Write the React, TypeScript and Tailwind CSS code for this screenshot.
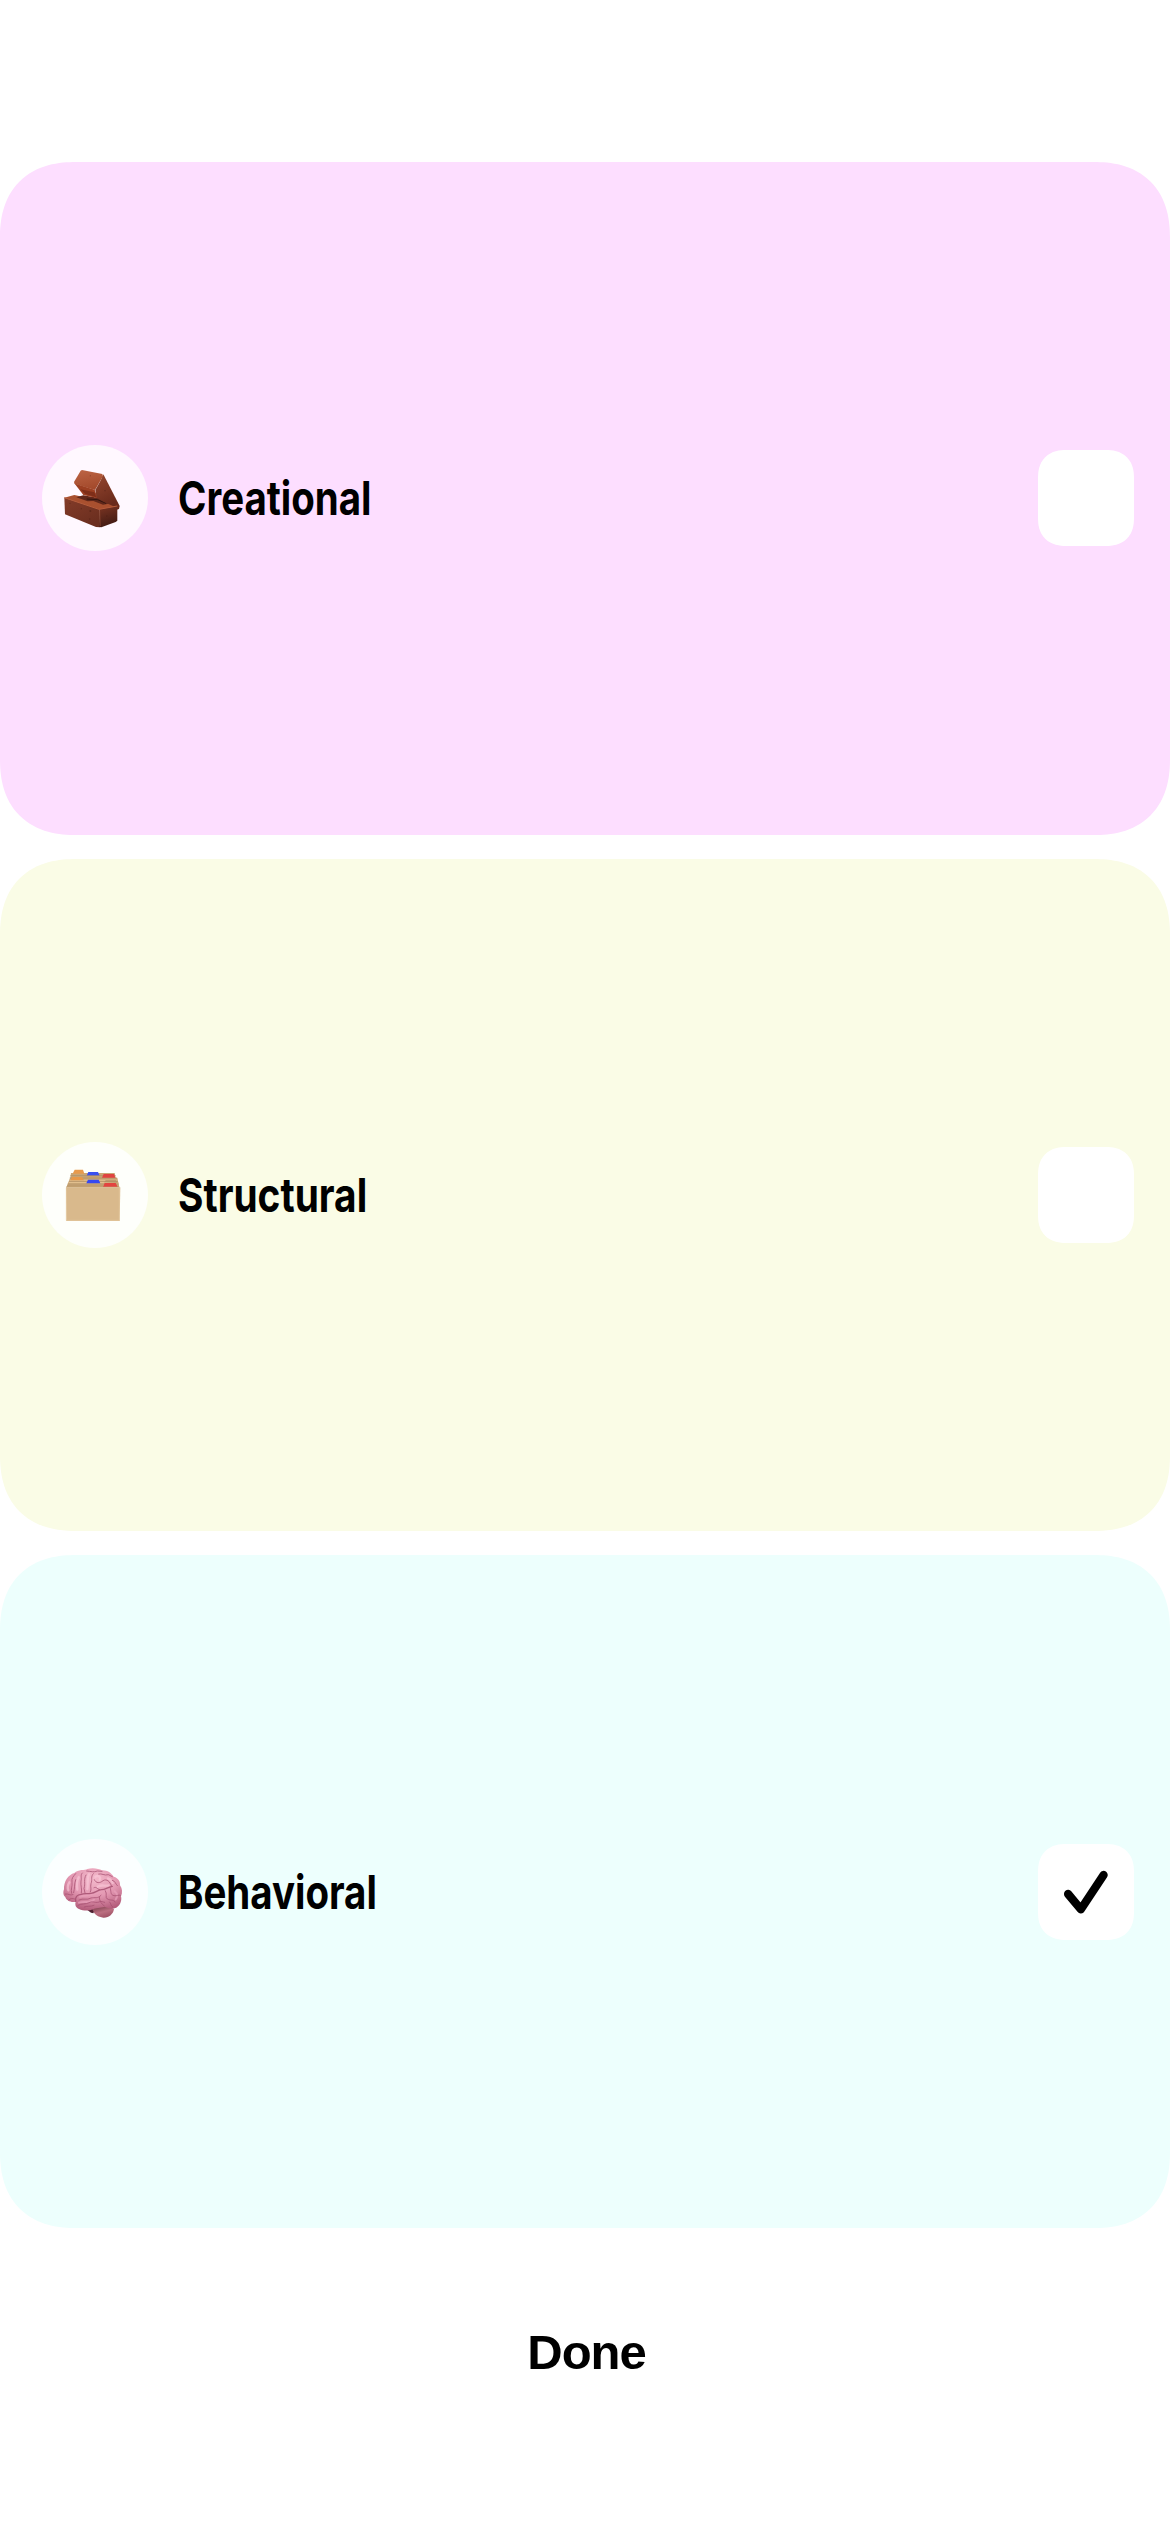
import React, { useState } from "react";

function BrickIcon() {
  return (
    <svg viewBox="36 43 318 318" className="size-full" aria-hidden="true">
      <defs>
        <linearGradient id="brickTop" x1="0" y1="0" x2="0.3" y2="1">
          <stop offset="0" stopColor="#bd6545" />
          <stop offset="1" stopColor="#a44a2c" />
        </linearGradient>
        <linearGradient id="brickSide" x1="0" y1="0" x2="0.4" y2="1">
          <stop offset="0" stopColor="#93452e" />
          <stop offset="1" stopColor="#692a1b" />
        </linearGradient>
        <linearGradient id="brickFront" x1="0" y1="0" x2="0.6" y2="1">
          <stop offset="0" stopColor="#843c29" />
          <stop offset="1" stopColor="#6b2e1f" />
        </linearGradient>
        <linearGradient id="brickEnd" x1="0" y1="0" x2="0.3" y2="1">
          <stop offset="0" stopColor="#7c3523" />
          <stop offset="1" stopColor="#431b13" />
        </linearGradient>
      </defs>
      <path d="M196 202L220 131L269 226L267 235L258 238Z" fill="url(#brickSide)" />
      <path d="M103 201L133 193L258 220L263 230L209 238Z" fill="#a9502f" />
      <path d="M139 200L160 194L212 203L236 219L219 222L190 211L173 212Z" fill="#60271a" />
      <path d="M170 205L203 207L228 218" fill="none" stroke="#321610" strokeWidth="3" />
      <path d="M133 158L194 177L203 203L160 193Z" fill="#9c3f22" />
      <path d="M151 176L193 185L199 200L166 190Z" fill="#7e2e19" />
      <path d="M152 120L156 118L217 130L219 137L195 178L134 160L132 154Z" fill="url(#brickTop)" />
      <path d="M196 178L219 137L265 223L260 231L222 214L200 201Z" fill="url(#brickSide)" />
      <path d="M103 201L209 236L210 290L198 289L105 251Z" fill="url(#brickFront)" />
      <path d="M209 236L262 226V270L257 274L214 290L208 289Z" fill="url(#brickEnd)" />
      <path d="M103 201L207 236L262 226" fill="none" stroke="#b65c3b" strokeWidth="3" />
      <path d="M209 240L211 286" stroke="#8c442e" strokeWidth="2" />
      <g fill="#4b1d14" opacity=".5">
        <circle cx="120" cy="218" r="1.8" />
        <circle cx="154" cy="234" r="1.8" />
        <circle cx="181" cy="241" r="3" />
        <circle cx="179" cy="265" r="2" />
        <circle cx="225" cy="180" r="2" />
        <circle cx="181" cy="135" r="1.5" />
        <circle cx="230" cy="256" r="2" />
      </g>
    </svg>
  );
}

function DividersIcon() {
  return (
    <svg viewBox="36 36 318 318" className="size-full" aria-hidden="true">
      <path d="M123 129H254L257 143H262L268 172H109L121 142Z" fill="#c9a675" />
      <path d="M129 129L134 119H159L163 131H129Z" fill="#e79a4c" />
      <path d="M170 137L175 126H204L209 137Z" fill="#3950f0" />
      <path d="M121 137H257M119 144H260" stroke="#ab8c62" strokeWidth="2" />
      <path d="M216 143L221 132H252L256 143Z" fill="#e04340" />
      <path d="M118 151H263M115 158H265" stroke="#e1bf8e" strokeWidth="4" />
      <path d="M121 151L126 141H156L162 151Z" fill="#e79848" />
      <path d="M117 154H264M113 162H267" stroke="#b4946a" strokeWidth="2" />
      <path d="M222 157L227 151H258L264 158Z" fill="#b49367" />
      <path d="M169 160L174 149H206L211 160Z" fill="#3548f1" />
      <path d="M219 171L224 159H257L263 171Z" fill="#e34440" />
      <path d="M112 167H220M109 171H268" stroke="#b8976b" strokeWidth="2" />
      <path d="M108 172H271L269 273H109Z" fill="#d9b98c" />
      <path d="M109 173V271H268V173" fill="none" stroke="#e5caa0" strokeWidth="2" />
    </svg>
  );
}

function BrainIcon() {
  return (
    <svg viewBox="36 42 318 318" className="size-full" aria-hidden="true">
      <defs>
        <radialGradient id="brainBody" cx=".52" cy=".25" r=".75">
          <stop offset="0" stopColor="#f3b9cb" />
          <stop offset=".55" stopColor="#e398b2" />
          <stop offset="1" stopColor="#b45d7b" />
        </radialGradient>
        <linearGradient id="brainStem" x1="0" y1="0" x2=".5" y2="1">
          <stop offset="0" stopColor="#703642" />
          <stop offset=".6" stopColor="#bb6f81" />
          <stop offset="1" stopColor="#a15367" />
        </linearGradient>
      </defs>
      <path d="M169 253L183 263L190 265L198 246Z" fill="#4d2030" />
      <path d="M187 252C193 239 235 241 252 252C250 267 236 279 220 278C204 276 193 270 187 252Z" fill="url(#brainStem)" />
      <path d="M102 193C101 169 115 149 133 144C145 133 165 136 172 132C188 127 207 131 216 136C231 135 244 144 251 155C266 159 271 171 270 181C277 191 278 203 273 214C277 228 268 247 254 250C244 253 232 248 224 245C210 250 197 247 190 253C174 259 159 257 147 252C138 248 134 240 137 230C124 234 108 226 106 216C99 211 99 201 102 193Z" fill="url(#brainBody)" />
      <g fill="none" stroke="#fbcbdb" strokeWidth="7" strokeLinecap="round" opacity=".6">
        <path d="M146 157C139 168 141 179 142 194" />
        <path d="M177 148C170 160 175 176 172 192" />
        <path d="M196 155C205 150 213 156 209 164" />
        <path d="M234 160C241 162 246 168 248 174" />
        <path d="M118 172C113 180 112 189 115 196" />
        <path d="M203 185C214 178 223 184 236 181" />
      </g>
      <g fill="none" stroke="#e8a0ba" strokeWidth="6" strokeLinecap="round" opacity=".75">
        <path d="M150 215C168 210 185 213 207 203" />
        <path d="M254 199C264 206 262 216 257 223" />
        <path d="M147 233C160 228 177 236 192 224" />
      </g>
      <g fill="none" stroke="#a64f70" strokeWidth="2.6" strokeLinecap="round" strokeLinejoin="round" opacity=".85">
        <path d="M137 229C134 216 142 209 153 208C164 204 170 207 183 205C197 205 203 193 216 194C226 193 232 187 247 184" strokeWidth="4" />
        <path d="M137 146C130 155 124 158 126 172C128 184 121 193 125 205" />
        <path d="M157 144C150 150 156 158 153 168C151 182 157 191 154 204" />
        <path d="M137 164C132 178 135 189 131 203" />
        <path d="M168 150C160 163 167 176 162 190L165 204" />
        <path d="M190 146C181 155 188 164 183 176C180 187 186 192 181 201" />
        <path d="M170 138C183 139 192 143 202 138L216 139" />
        <path d="M193 164C198 176 210 175 219 167C231 160 240 171 244 182" />
        <path d="M206 147C215 144 223 153 235 149L247 155" />
        <path d="M192 188C200 184 200 192 209 194" />
        <path d="M247 166C256 168 256 176 262 182" />
        <path d="M240 187C245 198 239 209 252 212C261 214 266 208 271 211" />
        <path d="M226 197C233 207 224 217 232 222C243 228 250 222 255 231" />
        <path d="M147 225C161 218 170 227 183 219C195 216 203 222 213 211" />
        <path d="M144 241C155 234 164 240 180 232C190 227 196 237 212 229L224 232" />
        <path d="M163 246C171 242 180 246 192 241M208 217C208 229 215 237 223 243" />
        <path d="M239 231C244 235 241 242 248 246" />
        <path d="M106 207C116 205 119 213 129 209M116 225C121 219 129 220 134 222" />
      </g>
    </svg>
  );
}

function CheckMark() {
  return (
    <svg viewBox="0 0 96 96" className="size-full" fill="none" aria-hidden="true">
      <path d="M30.1 50L42.9 65.3L65.6 31" stroke="#000" strokeWidth="8.3" strokeLinecap="round" strokeLinejoin="round" />
    </svg>
  );
}

const categories = [
  { name: "Creational", icon: <BrickIcon />, card: "bg-[#fddeff]", circle: "bg-[#fff8ff]", label: "scale-x-[0.818]" },
  { name: "Structural", icon: <DividersIcon />, card: "bg-[#fafce6]", circle: "bg-[#fefffb]", label: "scale-x-[0.826]" },
  { name: "Behavioral", icon: <BrainIcon />, card: "bg-[#edfffd]", circle: "bg-[#fbffff]", label: "scale-x-[0.818]" },
];

export default function App() {
  const [selected, setSelected] = useState<string[]>(["Behavioral"]);
  const toggle = (name: string) =>
    setSelected((now) => (now.includes(name) ? now.filter((n) => n !== name) : [...now, name]));

  return (
    <main className="flex h-[2532px] w-[1170px] flex-col bg-white pt-[162px] text-black">
      <div className="flex h-[2066px] flex-col gap-6">
        {categories.map(({ name, icon, card, circle, label }) => (
          <section
            key={name}
            className={`flex flex-1 items-center rounded-[66px] pr-9 pl-[42px] supports-[corner-shape:squircle]:rounded-[76px] supports-[corner-shape:squircle]:[corner-shape:superellipse(1.22)] ${card}`}
          >
            <div className={`size-[106px] shrink-0 rounded-full ${circle}`}>{icon}</div>
            <h2
              className={`ml-[30px] flex-1 origin-left font-['Inter',sans-serif] text-[47px] leading-[60px] font-bold ${label}`}
            >
              {name}
            </h2>
            <button
              type="button"
              role="checkbox"
              aria-label={name}
              aria-checked={selected.includes(name)}
              onClick={() => toggle(name)}
              className="size-24 shrink-0 rounded-[24px] bg-white supports-[corner-shape:squircle]:rounded-[28px] supports-[corner-shape:squircle]:[corner-shape:superellipse(1.22)]"
            >
              {selected.includes(name) && <CheckMark />}
            </button>
          </section>
        ))}
      </div>
      <button
        type="button"
        className="mx-auto mt-[94px] pl-[3px] font-['Liberation_Sans',sans-serif] text-[49px] leading-[60px] font-bold tracking-[-1px]"
      >
        Done
      </button>
    </main>
  );
}
